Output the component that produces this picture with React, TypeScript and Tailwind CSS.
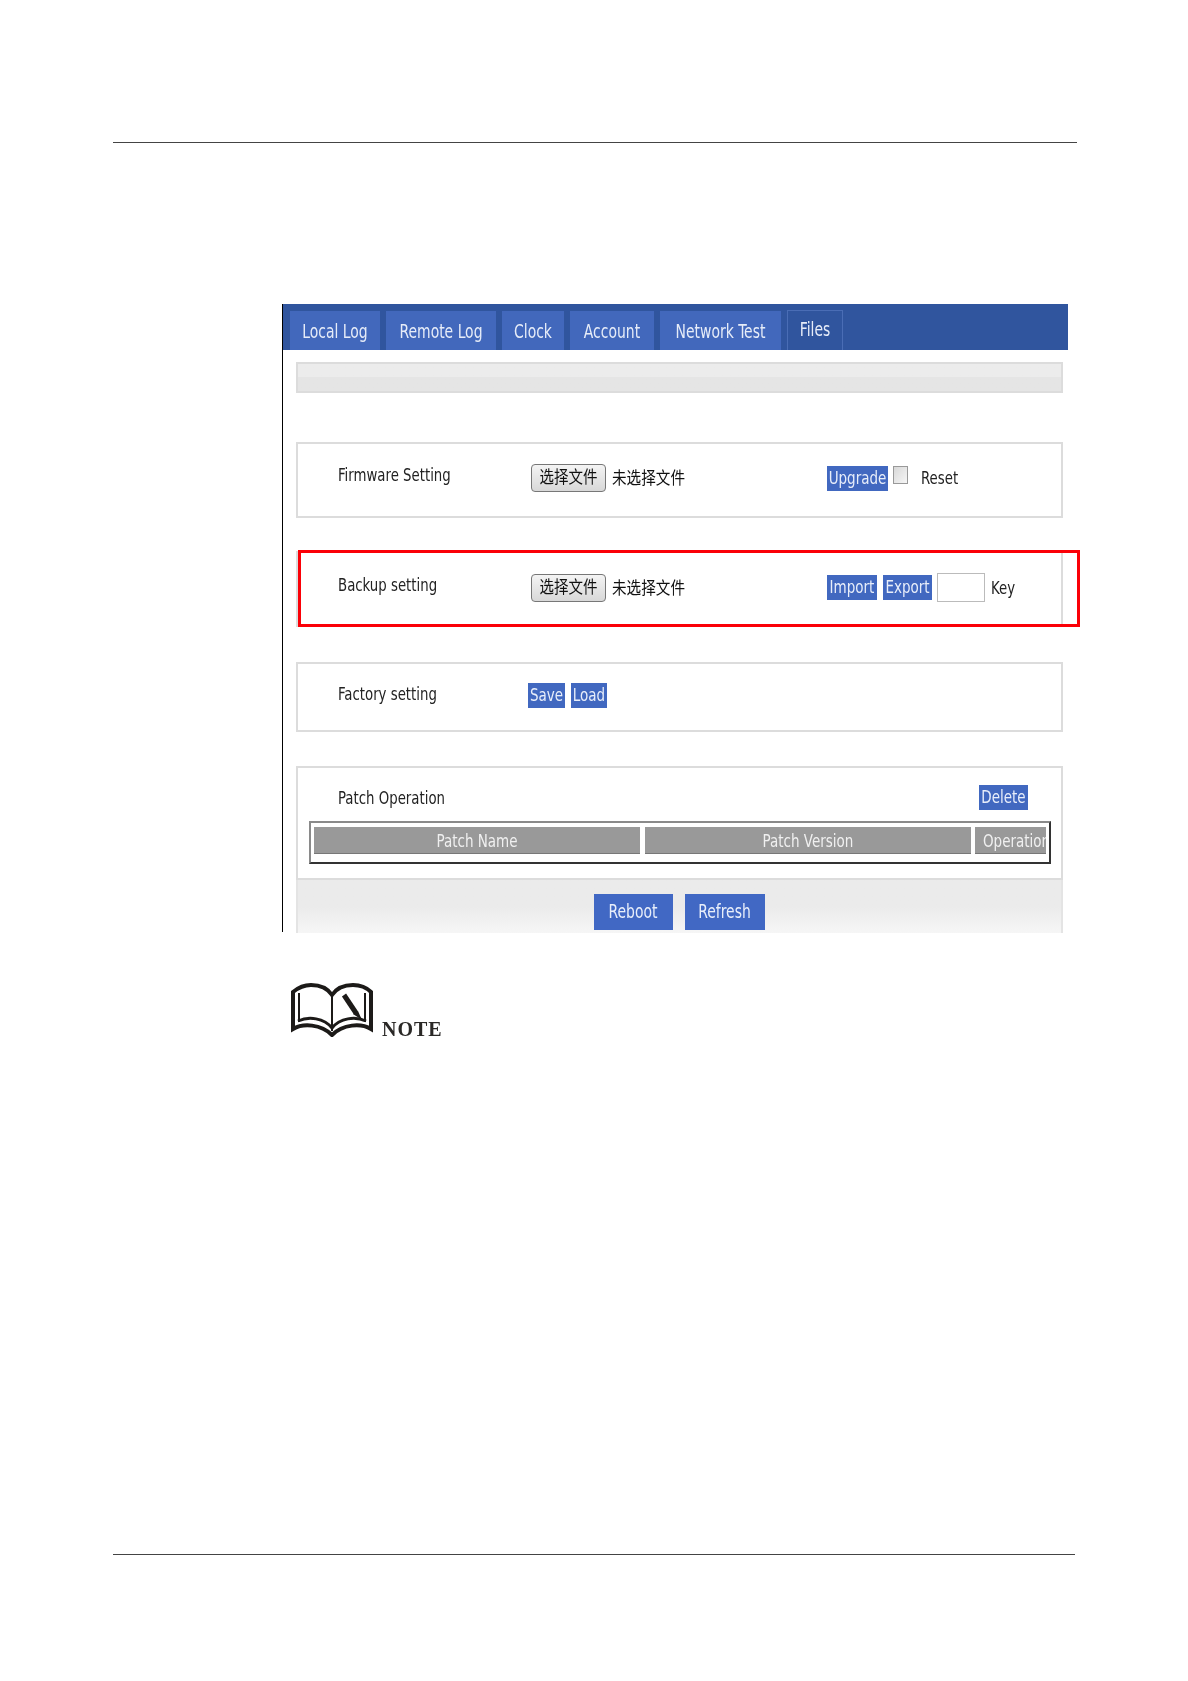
const sans = { fontFamily: '"DejaVu Sans Condensed", "DejaVu Sans", "Noto Sans CJK SC", sans-serif' };

const tabs = [
  { label: 'Local Log', w: 'w-[90px]' },
  { label: 'Remote Log', w: 'w-[110px]' },
  { label: 'Clock', w: 'w-[62px]' },
  { label: 'Account', w: 'w-[84px]' },
  { label: 'Network Test', w: 'w-[121px]' },
];

function Txt({ children }: { children: React.ReactNode }) {
  return <span className="inline-block scale-y-[1.2] whitespace-nowrap">{children}</span>;
}

function Btn({ label, w }: { label: string; w: string }) {
  return (
    <span className={`flex h-[25px] ${w} items-center justify-center overflow-hidden bg-[#4168c0] text-[15px] text-[#e8eefa]`}>
      <Txt>{label}</Txt>
    </span>
  );
}

function FilePicker({ shift }: { shift: string }) {
  return (
    <div className={`flex w-[296px] items-center ${shift}`}>
      <span className="flex h-[28px] w-[75px] items-center justify-center rounded-[4px] border border-[#777777] bg-gradient-to-b from-[#f4f4f4] to-[#d8d8d8] text-[14.5px] text-[#111111]">
        <Txt>选择文件</Txt>
      </span>
      <span className="ml-[6px] text-[14.6px] text-[#111111]">
        <Txt>未选择文件</Txt>
      </span>
    </div>
  );
}

function Row({ label, h, mt, shift, children }: { label: string; h: string; mt: string; shift: string; children: React.ReactNode }) {
  return (
    <div className={`${h} ${mt} flex items-center border-2 border-[#dcdcdc] bg-white pl-[40px] text-[14.8px] text-[#222222]`}>
      <div className={`w-[193px] ${shift}`}>
        <Txt>{label}</Txt>
      </div>
      {children}
    </div>
  );
}

function BookIcon() {
  return (
    <svg width="82" height="54" viewBox="0 0 82 54" fill="none" stroke="#1c1a18">
      <path strokeWidth="4" d="M2 46V9C8 4 14 2 20 2C30 2 37 6 41 12C45 6 52 2 62 2C68 2 75 4 80 9V46C70 40 52 41 41 52C30 41 12 40 2 46Z" />
      <path strokeWidth="2" d="M8 39V10M74 39V10M41 12V48" />
      <path strokeWidth="3" d="M7 38C18 33 33 35 41 45C49 35 64 33 75 38" />
      <path strokeWidth="5" d="M53 12L65 30" />
      <path fill="#1c1a18" stroke="none" d="M62 31L67 28L71 37Z" />
    </svg>
  );
}

export default function App() {
  return (
    <div className="h-[1681px] overflow-hidden bg-white pt-[142px]" style={sans}>
      <div className="ml-[113px] h-px w-[964px] bg-[#444444]" />

      <div className="relative ml-[282px] mt-[161px] h-[628px] w-[786px] border-l border-[#000000] blur-[0.3px]">
        <div className="flex h-[46px] items-end gap-[6px] bg-[#30559e] pl-[7px] text-[15.5px] text-[#e6ecf8]">
          {tabs.map((t) => (
            <div key={t.label} className={`flex h-[39px] ${t.w} items-center justify-center bg-[#4268bc] pt-[4px]`}>
              <Txt>{t.label}</Txt>
            </div>
          ))}
          <div className="flex h-[40px] w-[56px] items-center justify-center border border-b-0 border-[#4a6db5]">
            <Txt>Files</Txt>
          </div>
        </div>

        <div className="ml-[13px] w-[767px]">
          <div className="mt-[12px] h-[31px] border-2 border-[#dcdcdc] bg-gradient-to-b from-[#ececec] from-50% to-[#e5e5e5] to-50%" />

          <Row label="Firmware Setting" h="h-[76px]" mt="mt-[49px]" shift="-translate-y-[5px]">
            <FilePicker shift="-translate-y-[2px]" />
            <div className="flex -translate-y-[2px] items-center">
              <Btn label="Upgrade" w="w-[61px]" />
              <span className="-mt-[6px] ml-[5px] h-[18px] w-[15px] border border-[#999999] bg-gradient-to-br from-[#d8d8d8] to-[#f6f6f6]" />
              <span className="ml-[13px]">
                <Txt>Reset</Txt>
              </span>
            </div>
          </Row>

          <Row label="Backup setting" h="h-[76px]" mt="mt-[33px]" shift="-translate-y-[4px]">
            <FilePicker shift="-translate-y-[1px]" />
            <div className="flex -translate-y-[2px] items-center">
              <Btn label="Import" w="w-[50px]" />
              <span className="ml-[6px]">
                <Btn label="Export" w="w-[49px]" />
              </span>
              <span className="ml-[5px] h-[29px] w-[48px] border border-[#bbbbbb] bg-white" />
              <span className="ml-[6px] translate-y-[1px]">
                <Txt>Key</Txt>
              </span>
            </div>
          </Row>

          <Row label="Factory setting" h="h-[70px]" mt="mt-[35px]" shift="-translate-y-[3px]">
            <div className="-ml-[3px] flex -translate-y-[2px] gap-[6px]">
              <Btn label="Save" w="w-[37px]" />
              <Btn label="Load" w="w-[36px]" />
            </div>
          </Row>

          <div className="mt-[34px] h-[114px] border-2 border-[#dcdcdc] bg-white text-[14.8px] text-[#222222]">
            <div className="flex h-[53px] items-center justify-between pl-[40px] pr-[33px]">
              <div className="translate-y-[4px]">
                <Txt>Patch Operation</Txt>
              </div>
              <div className="translate-y-[3px]">
                <Btn label="Delete" w="w-[49px]" />
              </div>
            </div>
            <div className="ml-[11px] flex h-[43px] w-[742px] border-2 border-t-[#8a8a8a] border-l-[#8a8a8a] border-r-[#333333] border-b-[#333333] pl-[3px] pt-[4px] text-[15px]">
              <div className="flex h-[27px] w-[326px] items-center justify-center border-b border-[#777777] bg-[#999999] pt-[2px] text-[#f0f0f0]">
                <Txt>Patch Name</Txt>
              </div>
              <div className="ml-[5px] flex h-[27px] w-[326px] items-center justify-center border-b border-[#777777] bg-[#999999] pt-[2px] text-[#f0f0f0]">
                <Txt>Patch Version</Txt>
              </div>
              <div className="ml-[4px] flex h-[27px] w-[71px] items-center overflow-hidden border-b border-[#777777] bg-[#999999] pl-[8px] pt-[2px] text-[#f0f0f0]">
                <Txt>Operation</Txt>
              </div>
            </div>
          </div>

          <div className="flex h-[53px] justify-center gap-[12px] border-x-2 border-[#e4e4e4] bg-gradient-to-b from-[#ebebeb] from-50% to-[#f6f6f6] pt-[14px] pr-[1px]">
            <span className="flex h-[36px] w-[79px] items-center justify-center bg-[#4168c4] pt-[2px] text-[15.5px] text-[#e8eefa]">
              <Txt>Reboot</Txt>
            </span>
            <span className="flex h-[36px] w-[80px] items-center justify-center bg-[#4168c4] pt-[2px] text-[15.5px] text-[#e8eefa]">
              <Txt>Refresh</Txt>
            </span>
          </div>
        </div>

        <div className="absolute left-[15px] top-[246px] h-[77px] w-[782px] border-[3px] border-[#fb0007]" />
      </div>

      <div className="ml-[291px] mt-[51px] flex items-end blur-[0.3px]">
        <BookIcon />
        <span
          className="mb-[-2px] ml-[9px] text-[20px] font-bold leading-[20px] tracking-[1px] text-[#2a2826]"
          style={{ fontFamily: '"Liberation Serif", serif' }}
        >
          NOTE
        </span>
      </div>

      <div className="ml-[113px] mt-[517px] h-px w-[962px] bg-[#444444]" />
    </div>
  );
}
